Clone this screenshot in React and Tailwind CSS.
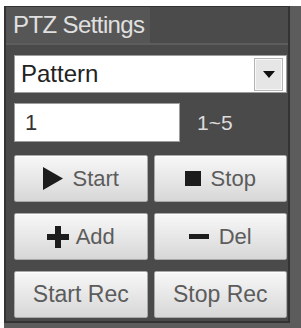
export default function App() {
  const font = { fontFamily: '"Liberation Sans", Arial, sans-serif' };
  const btn =
    "flex h-[47px] items-center justify-center rounded-[2px] border border-[#a9a9a9] bg-gradient-to-b from-[#f8f8f8] to-[#d7d7d7] leading-none text-[#5c5c5c] shadow-[inset_0_1px_0_#fff]";

  return (
    <div className="flex h-[328px] w-[301px] flex-col bg-white" style={font}>
      <div className="h-[6px] shrink-0" />
      <div className="flex flex-1">
        <div className="w-[4px] shrink-0" />
        <div className="flex-1 bg-[#5c5c5c]">
          <div className="flex h-[317px] w-[286px] flex-col border-x-2 border-t border-b-2 border-[#333] bg-[#4a4a4a]">
            {/* header */}
            <div className="flex h-[36px] shrink-0">
              <div className="flex w-[144px] items-center bg-[#565656] pl-[7px] text-[24px] tracking-[-0.6px] text-[#e0e0e0]">
                PTZ Settings
              </div>
              <div className="flex-1 bg-[#4b4b4b]" />
            </div>
            <div className="h-[2px] shrink-0 bg-[#5d5d5d]" />

            <div className="flex flex-col pl-[8px] pr-[1px] pt-[10px]">
              {/* select */}
              <div className="flex h-[38px] items-center border border-[#9d9d9d] bg-white pl-[6px] pr-[3px]">
                <span className="flex-1 text-[24px] leading-none text-[#222]">Pattern</span>
                <div className="flex h-[33px] w-[29px] items-center justify-center border border-[#b5b5b5] bg-[#e6e6e6] shadow-[inset_0_0_0_1px_#f7f7f7]">
                  <svg width="12" height="7" viewBox="0 0 12 7">
                    <path d="M0 0H12L6 7Z" fill="#111" />
                  </svg>
                </div>
              </div>

              {/* input */}
              <div className="mt-[10px] flex items-center">
                <div className="flex h-[39px] w-[166px] items-center border border-[#9d9d9d] bg-white pl-[10px] text-[22px] leading-none text-[#333]">
                  1
                </div>
                <span className="ml-[17px] text-[21px] leading-none text-[#dcdcdc]">1~5</span>
              </div>

              {/* buttons */}
              <div className="mt-[13px] grid grid-cols-2 gap-x-[6px] gap-y-[11px]">
                <button type="button" className={`${btn} gap-[10px] text-[22px]`}>
                  <svg width="20" height="23" viewBox="0 0 20 23">
                    <path d="M0 0L20 11.5L0 23Z" fill="#1c1c1c" />
                  </svg>
                  Start
                </button>
                <button type="button" className={`${btn} gap-[10px] text-[22px]`}>
                  <span className="h-[15px] w-[16px] bg-[#1c1c1c]" />
                  Stop
                </button>
                <button type="button" className={`${btn} gap-[7px] text-[22px]`}>
                  <svg width="22" height="22" viewBox="0 0 22 22">
                    <path d="M8 0H14V8H22V14H14V22H8V14H0V8H8Z" fill="#1c1c1c" />
                  </svg>
                  Add
                </button>
                <button type="button" className={`${btn} gap-[10px] text-[22px]`}>
                  <span className="h-[5px] w-[20px] bg-[#1c1c1c]" />
                  Del
                </button>
                <button type="button" className={`${btn} text-[23px]`}>
                  Start Rec
                </button>
                <button type="button" className={`${btn} text-[23px]`}>
                  Stop Rec
                </button>
              </div>
            </div>
          </div>
        </div>
      </div>
    </div>
  );
}
